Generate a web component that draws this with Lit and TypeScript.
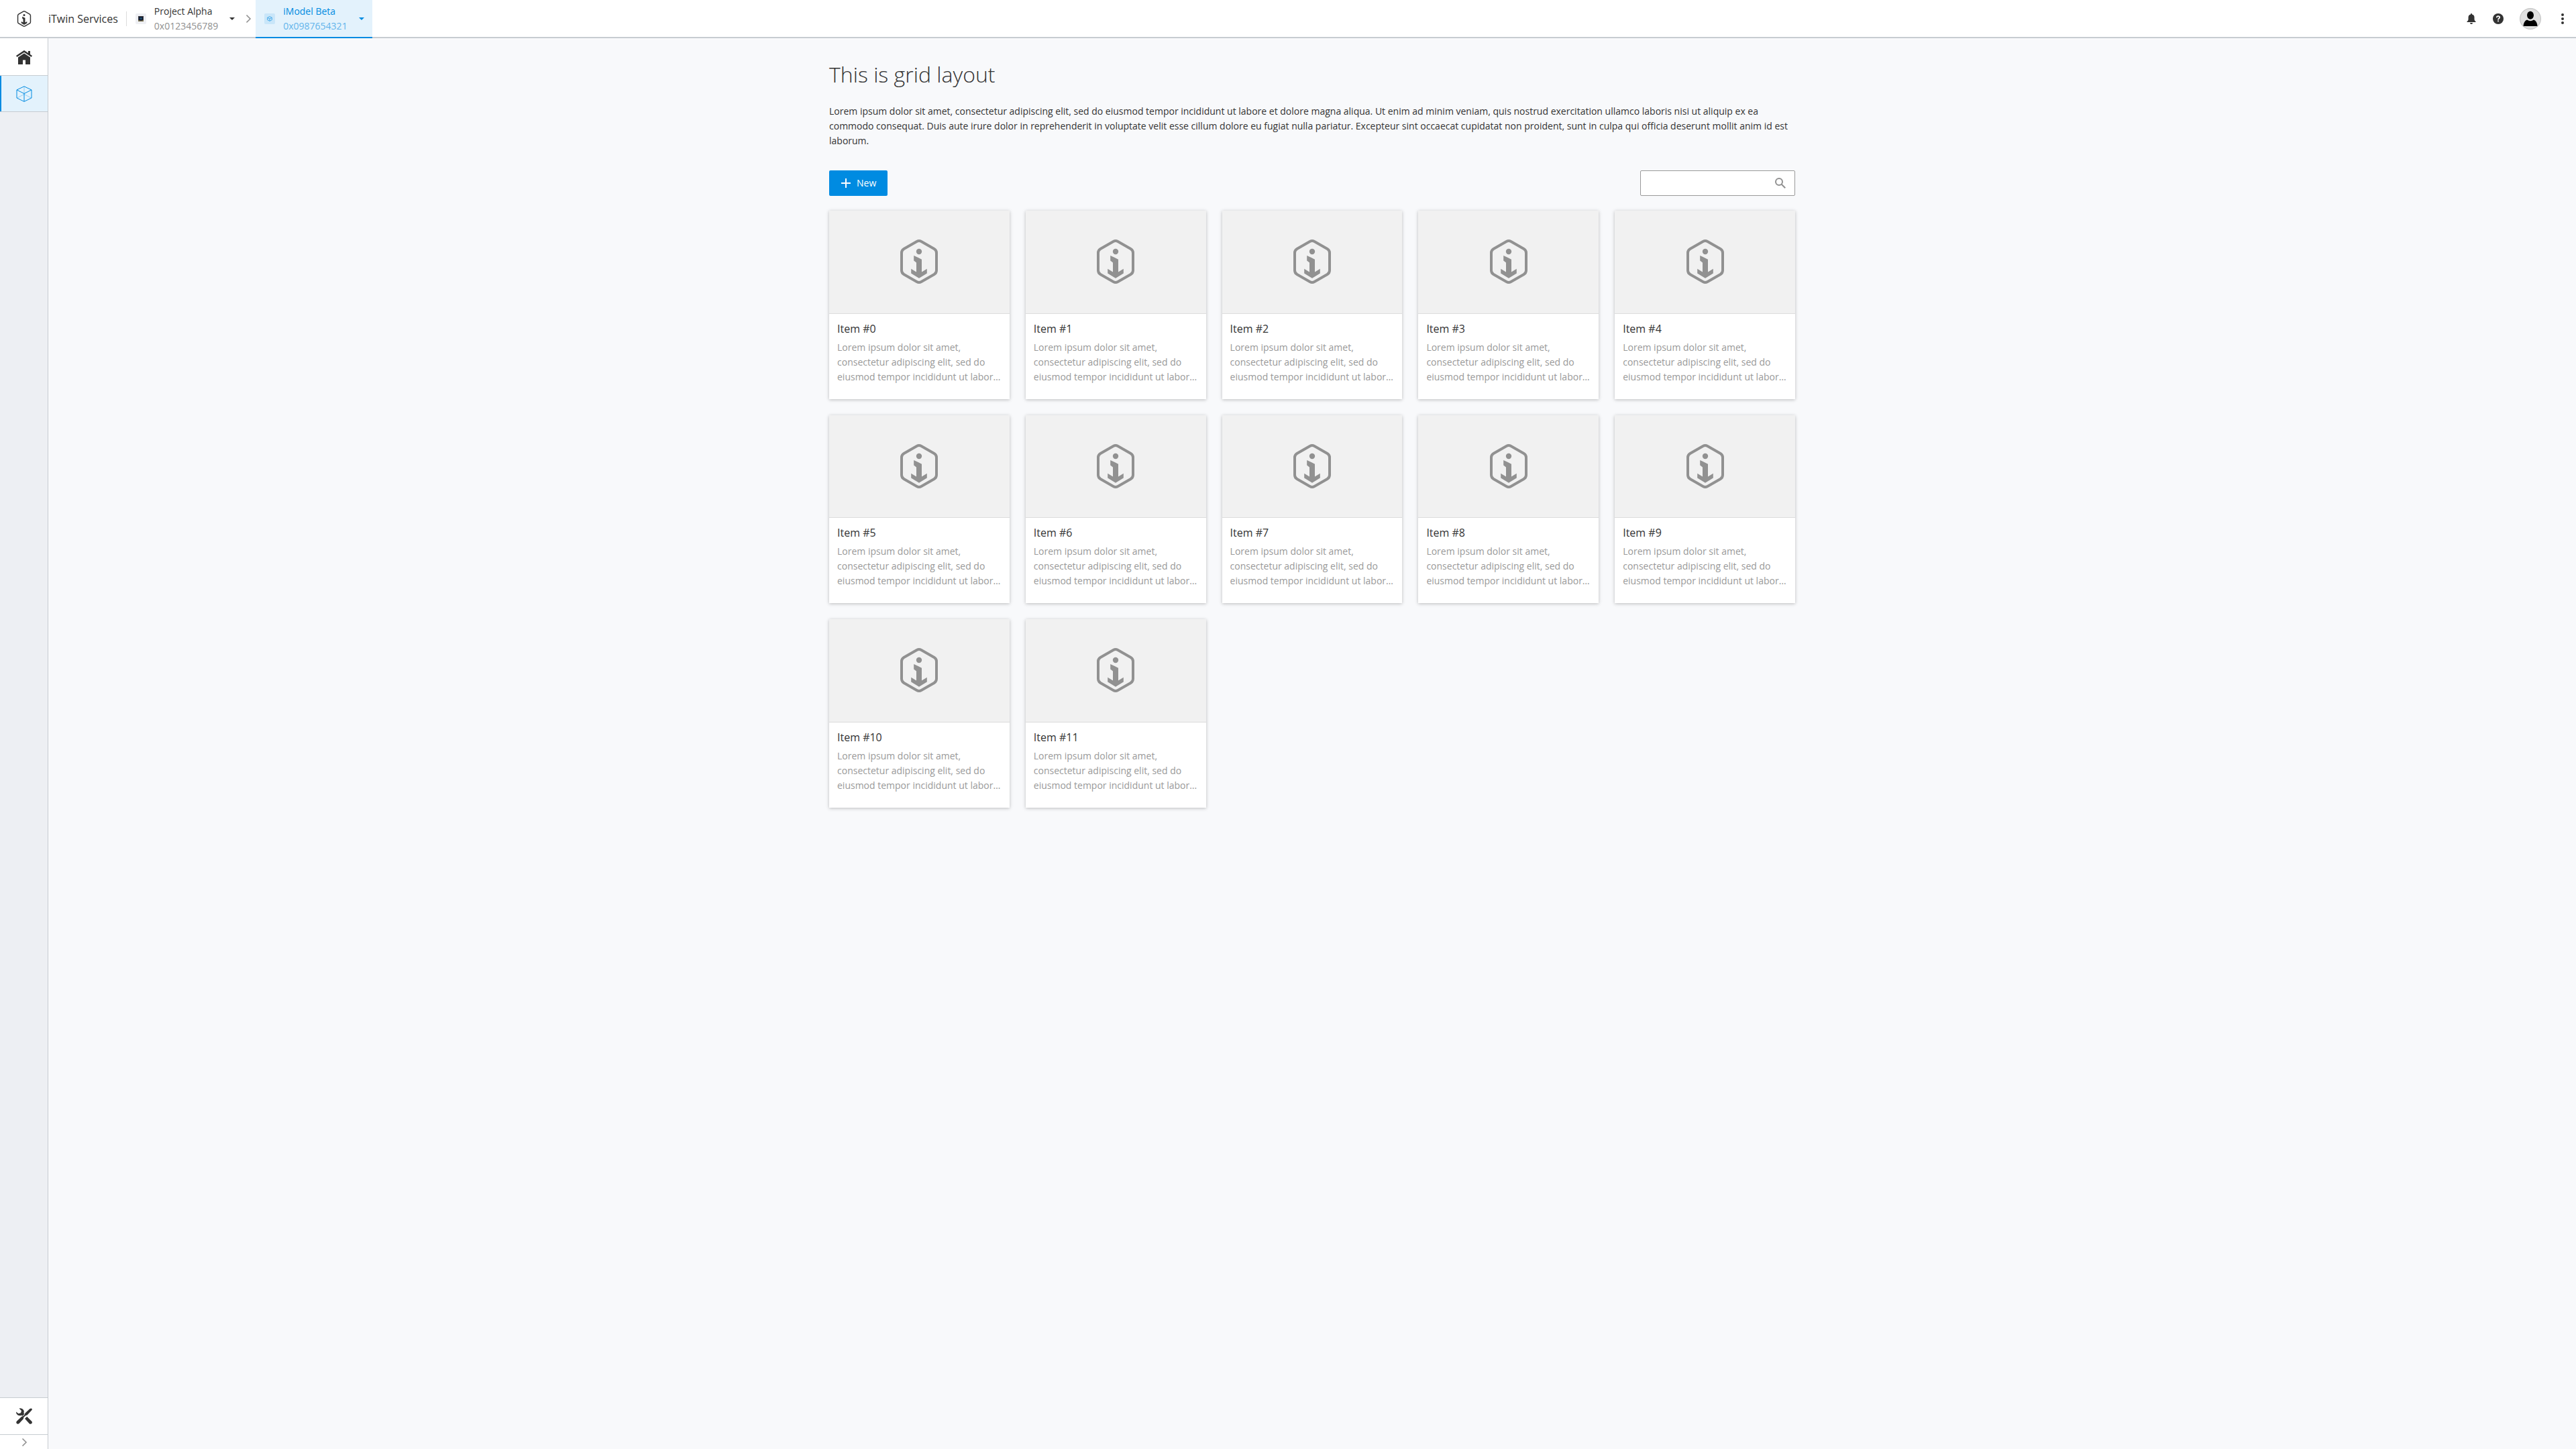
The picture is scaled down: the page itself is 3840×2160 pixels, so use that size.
import { LitElement, html, css, svg } from "lit";
import { customElement } from "lit/decorators.js";

const mark = (cls: string) => html`<svg class=${cls} viewBox="0 0 56 66" aria-hidden="true">
  <path fill="none" stroke="currentColor" stroke-width="4" d="M24.6 3Q28 1.100 31.400 3L50.600 14Q54 16 54 20V46Q54 50 50.600 52L31.400 63Q28 64.900 24.600 63L5.400 52Q2 50 2 46V20Q2 16 5.400 14Z"/>
  <circle cx="28" cy="18" r="4.200" fill="currentColor"/>
  <path fill="currentColor" d="M20.200 24Q26 26.500 32 29.800V48.400L39.800 43.800V50.600L28 57.800L16.200 50.600V43.800L24 48.400V34.400L20.200 31.600Z"/>
</svg>`;

const caret = html`<svg class="caret" viewBox="0 0 8 4" aria-hidden="true"><path fill="currentColor" d="M0 0H8L4 4Z"/></svg>`;

const chevron = html`<svg class="chevron" viewBox="0 0 16 16" aria-hidden="true"><path fill="none" stroke="currentColor" stroke-width="1.600" d="M5.500 2.500L11 8L5.500 13.500"/></svg>`;

const cubeLines = svg`<path fill="none" stroke="currentColor" stroke-width="1" d="M12 .8L23 6V18L12 23.400L1 18V6ZM1 6L12 11.500L23 6M12 11.500V23"/><path fill="none" stroke="currentColor" stroke-width="1" opacity=".35" d="M12 1V12.500L1.500 18M12 12.500L22.500 18"/>`;

const CARD_TEXT =
  "Lorem ipsum dolor sit amet, consectetur adipiscing elit, sed do eiusmod tempor incididunt ut labore et dolore magna aliqua.";

@customElement("app-root")
export class AppRoot extends LitElement {
  static styles = css`
    :host {
      display: grid;
      grid-template: auto 1fr / 72px 1fr;
      min-height: 100vh;
      background: #f8f9fb;
      color: #333;
      font: 14px/22px "Open Sans", sans-serif;
    }
    * { box-sizing: border-box; }
    button { font: inherit; color: inherit; border: 0; padding: 0; margin: 0; background: none; cursor: pointer; }
    h1, h2, p, ul { margin: 0; padding: 0; font-weight: 400; }
    svg { display: block; flex: none; }
    .header {
      grid-column: 1 / -1;
      display: flex;
      height: 57px;
      background: #fff;
      border-bottom: 2px solid #c7ccd1;
      justify-content: space-between;
    }
    .left, .right { display: flex; align-items: center; }
    .brand { display: flex; align-items: center; color: #333; text-decoration: none; font-size: 16px; }
    .brand-box { width: 72px; display: flex; justify-content: center; }
    .brand-icon { width: 22px; height: 24px; }
    .line { width: 1px; height: 22px; background: #dcdcdc; margin-left: 12px; }
    .crumb { display: flex; align-items: center; height: 57px; padding-left: 13px; align-self: flex-start; }
    .crumb-main { display: flex; align-items: center; text-align: left; padding-bottom: 2px; }
    .thumb { width: 16px; height: 16px; border-radius: 2px; background: #eeeff3; display: grid; place-items: center; margin-right: 12px; }
    .thumb svg { width: 8px; height: 8px; }
    .names { display: flex; flex-direction: column; }
    .sub { color: #8f8f8f; }
    .menu { display: flex; align-items: center; justify-content: center; width: 37px; padding-left: 5px; height: 55px; align-self: flex-start; }
    .caret { width: 8px; height: 4px; }
    .chevron { width: 16px; height: 16px; color: #919191; }
    .active { background: #e3f2fc; border-bottom: 2px solid #008be1; color: #008be1; margin-left: 3px; }
    .active .crumb-main { padding-bottom: 0; }
    .active .sub { color: #62b4eb; }
    .active .thumb { background: #c9e6f9; color: #4bacea; }
    .right { padding-right: 12px; }
    .icon-button { display: grid; place-items: center; width: 40px; height: 40px; }
    .icon16 { width: 16px; height: 16px; }
    .avatar { width: 32px; height: 32px; }
    .user { width: 56px; }
    .more { width: 16px; margin-left: 12px; }
    .side { display: flex; flex-direction: column; background: #edeff3; border-right: 1px solid #c7ccd1; }
    .nav { height: 56px; background: #fff; border-bottom: 1px solid #c7ccd1; display: grid; place-items: center; flex: none; }
    .nav svg { width: 24px; height: 24px; }
    .selected { height: 54px; background: #e3f2fc; color: #008be1; box-shadow: inset 2px 0 #008be1; }
    .tools { margin-top: auto; border-top: 1px solid #c7ccd1; }
    .expand { height: 21px; background: #fff; display: grid; place-items: center; }
    .main { width: 100%; max-width: 1440px; margin: 0 auto; padding-top: 32px; }
    h1 { font-size: 32px; line-height: 44px; font-weight: 300; }
    .intro { margin-top: 22px; }
    .bar { display: flex; justify-content: space-between; margin: 33px 0 22px; }
    .new { display: flex; align-items: center; height: 38px; padding: 0 17px; gap: 8px; background: #008be1; color: #fff; border-radius: 2px; }
    .search { display: flex; align-items: center; width: 231px; height: 38px; background: #fff; border: 1px solid #999; border-radius: 2px; padding: 0 13px 0 12px; color: #919191; }
    .search input { flex: 1; min-width: 0; border: 0; outline: 0; background: none; font: inherit; color: #333; }
    .grid { list-style: none; display: grid; grid-template-columns: repeat(auto-fill, minmax(260px, 1fr)); gap: 24px; }
    .card { background: #fff; box-shadow: 0 1px 5px rgba(0, 0, 0, .25); }
    .picture { aspect-ratio: 7 / 4; background: #f1f1f1; border-bottom: 1px solid #dcdcdc; display: grid; place-items: center; color: #919191; }
    .picture-icon { width: 56px; height: 66px; }
    .body { padding: 11px 12px 22px; }
    .card h2 { font-size: 16px; line-height: 22px; margin-bottom: 6px; }
    .card p { color: #999; display: -webkit-box; -webkit-box-orient: vertical; -webkit-line-clamp: 3; overflow: hidden; }
  `;

  render() {
    return html`
      <header class="header">
        <div class="left">
          <a class="brand" href="#"><span class="brand-box">${mark("brand-icon")}</span>iTwin Services</a>
          <span class="line"></span>
          <div class="crumb">
            <button class="crumb-main">
              <span class="thumb"><svg viewBox="0 0 8 8" aria-hidden="true"><path fill="#3a3d46" d="M0 0H8V8H0Z"/><path fill="#16181f" d="M1 1H7V6H1Z"/><path fill="#123c77" d="M2 2H6V5H2Z"/><path fill="#315b39" d="M3 3H5V4H3Z"/><path fill="#77704c" d="M0 6H2V7H6V6H8V8H0Z"/></svg></span>
              <span class="names"><span>Project Alpha</span><span class="sub">0x0123456789</span></span>
            </button>
            <button class="menu" aria-label="Switch project">${caret}</button>
          </div>
          ${chevron}
          <div class="crumb active">
            <button class="crumb-main">
              <span class="thumb"><svg viewBox="0 0 24 24" aria-hidden="true"><path fill="none" stroke="currentColor" stroke-width="3" d="M12 2L22 7V17L12 22L2 17V7ZM2 7L12 12L22 7M12 12V22"/></svg></span>
              <span class="names"><span>iModel Beta</span><span class="sub">0x0987654321</span></span>
            </button>
            <button class="menu" aria-label="Switch iModel">${caret}</button>
          </div>
        </div>
        <div class="right">
          <button class="icon-button" aria-label="Notifications"><svg class="icon16" viewBox="0 0 16 16"><path fill="currentColor" d="M8 0A1 1 0 0 0 7 1V1.500Q3.500 2.300 3.500 6V9Q3.500 11 1.500 12V13H14.500V12Q12.500 11 12.500 9V6Q12.500 2.300 9 1.500V1A1 1 0 0 0 8 0ZM6 14H10Q10 16 8 16Q6 16 6 14Z"/></svg></button>
          <button class="icon-button" aria-label="Help"><svg class="icon16" viewBox="0 0 16 16"><circle cx="8" cy="8" r="8" fill="currentColor"/><path fill="none" stroke="#fff" stroke-width="1.800" d="M5.800 6.200Q5.800 4.200 8 4.200Q10.200 4.200 10.200 5.800Q10.200 7 8.900 7.700Q8 8.300 8 9.600"/><path fill="#fff" d="M7.100 10.500H8.900V12.300H7.100Z"/></svg></button>
          <button class="icon-button user" aria-label="Account"><svg class="avatar" viewBox="0 0 32 32"><circle cx="16" cy="16" r="15.400" fill="#e0e0e0" stroke="#c6c6c6" stroke-width="1.200"/><ellipse cx="16" cy="10.800" rx="5" ry="6" fill="#000"/><path d="M5.500 27Q6 19.500 11 17.500Q16 21 21 17.500Q26 19.500 26.500 27Z" fill="#000"/></svg></button>
          <button class="icon-button more" aria-label="More"><svg class="icon16" viewBox="0 0 16 16"><g fill="currentColor"><circle cx="8" cy="2" r="2"/><circle cx="8" cy="8" r="2"/><circle cx="8" cy="14" r="2"/></g></svg></button>
        </div>
      </header>
      <nav class="side">
        <button class="nav" aria-label="Home"><svg viewBox="0 0 24 24"><path fill="currentColor" d="M12 2L0 10L1.300 12L12 4.900L22.700 12L24 10L21 8V3H18V6ZM3 12.500L12 6.500L21 12.500V23H14V16.500H10V23H3Z"/></svg></button>
        <button class="nav selected" aria-label="iModels"><svg viewBox="0 0 24 24">${cubeLines}</svg></button>
        <button class="nav tools" aria-label="Settings"><svg viewBox="0 0 24 24"><path fill="currentColor" d="M23.300.7Q22 0 20.500 1L13.500 7.500L12.500 10L10 12.300L8.500 12.500L1 19.500Q-.5 21.500 1 23Q2.500 24.500 4.500 23L11 16L11.200 14L14 11.300L16.500 10.500L23 3.500Q24.500 2 23.300.7ZM4.500.5Q9 -.5 11.200 3Q12.300 5.500 11.300 7.500L12.500 8.800L9.500 11.700L8 10.700Q3.500 12.300 1 9Q0 7.500 0 5.500L3.500 8.300L7 7.200L8 4ZM16.200 12.800L23.300 19.800Q24.500 21.500 23.300 23Q21.500 24.500 19.800 23.300L13 15.800Z"/></svg></button>
        <button class="expand" aria-label="Expand">${chevron}</button>
      </nav>
      <main class="main">
        <h1>This is grid layout</h1>
        <p class="intro">Lorem ipsum dolor sit amet, consectetur adipiscing elit, sed do eiusmod tempor incididunt ut labore et dolore magna aliqua. Ut enim ad minim veniam, quis nostrud exercitation ullamco laboris nisi ut aliquip ex ea commodo consequat. Duis aute irure dolor in reprehenderit in voluptate velit esse cillum dolore eu fugiat nulla pariatur. Excepteur sint occaecat cupidatat non proident, sunt in culpa qui officia deserunt mollit anim id est laborum.</p>
        <div class="bar">
          <button class="new"><svg class="icon16" viewBox="0 0 16 16"><path fill="currentColor" d="M7 1H9V7H15V9H9V15H7V9H1V7H7Z"/></svg>New</button>
          <label class="search"><input type="text" aria-label="Search" /><svg class="icon16" viewBox="0 0 16 16"><circle cx="6" cy="6" r="5" fill="none" stroke="currentColor" stroke-width="2"/><path fill="none" stroke="currentColor" stroke-width="2" d="M9.500 9.500L15.200 15.200"/></svg></label>
        </div>
        <ul class="grid">
          ${Array.from({ length: 12 }, (_, i) => html`<li class="card">
            <div class="picture">${mark("picture-icon")}</div>
            <div class="body"><h2>Item #${i}</h2><p>${CARD_TEXT}</p></div>
          </li>`)}
        </ul>
      </main>
    `;
  }
}
